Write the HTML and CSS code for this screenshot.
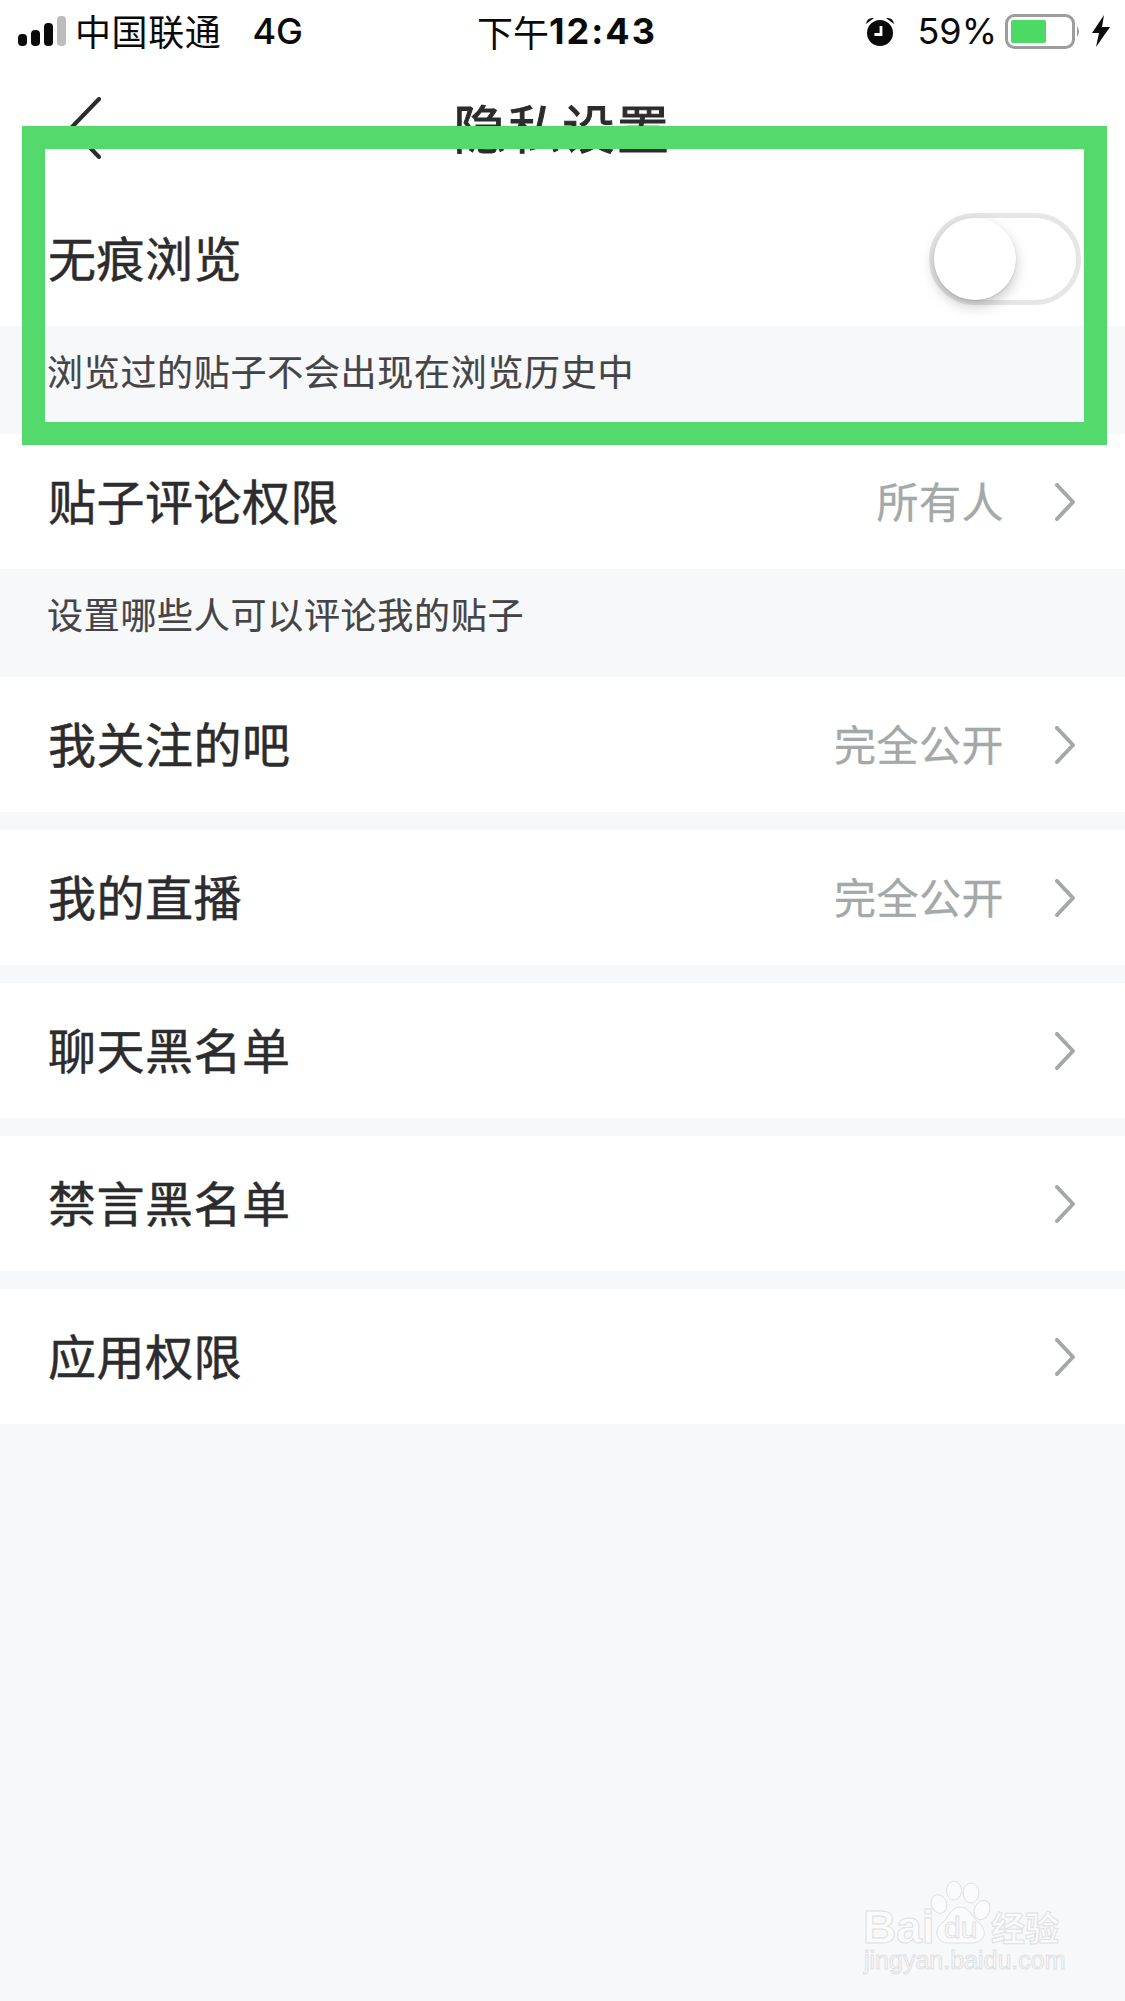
FILE: index.html
```html
<!DOCTYPE html>
<html lang="en">
<head>
  <meta charset="UTF-8">
  <title>隐私设置</title>
  <link rel="stylesheet" href="styles.css">
</head>
<body>

<div class="top">
  <div class="status">
    <div class="status-left">
      <svg class="signal" width="48" height="30" viewBox="0 0 48 30">
        <rect x="0" y="18" width="9" height="12" rx="4" fill="#0a0a0a"/>
        <rect x="13" y="14" width="9" height="16" rx="4" fill="#0a0a0a"/>
        <rect x="26" y="7" width="9" height="23" rx="4" fill="#0a0a0a"/>
        <rect x="39" y="0" width="9" height="30" rx="4" fill="#bdbdbd"/>
      </svg>
      <span class="carrier">中国联通</span>
      <span class="net">4G</span>
    </div>
    <div class="clock">下午<b>12:43</b></div>
    <div class="status-right">
      <svg width="32" height="30" viewBox="0 0 32 30">
        <circle cx="16" cy="17" r="13" fill="#0a0a0a"/>
        <path d="M2 8 Q3 1 10 2 Z M30 8 Q29 1 22 2 Z" fill="#0a0a0a"/>
        <path d="M17 10 V18.5 H10.5" fill="none" stroke="#fff" stroke-width="2.8"/>
      </svg>
      <span class="percent">59%</span>
      <svg width="76" height="35" viewBox="0 0 76 35">
        <rect x="1.5" y="1.5" width="67" height="32" rx="8" fill="#fff" stroke="#9d9d9d" stroke-width="3"/>
        <rect x="6" y="6" width="35" height="23" rx="2" fill="#4cd964"/>
        <path d="M72 12 Q76 17.5 72 23 Z" fill="#9d9d9d"/>
      </svg>
      <svg width="18" height="32" viewBox="0 0 18 32">
        <path d="M12 0 L0 18 H7 L4 32 L18 12 H10 Z" fill="#0a0a0a"/>
      </svg>
    </div>
  </div>
  <div class="nav">
    <svg class="back" width="34" height="62" viewBox="0 0 34 62">
      <path d="M31 2 L3 31 L31 60" fill="none" stroke="#2c2c2e" stroke-width="4" stroke-linecap="round" stroke-linejoin="round"/>
    </svg>
    <div class="nav-title">隐私设置</div>
  </div>
</div>

<div class="row">
  <span class="row-title">无痕浏览</span>
  <div class="toggle"><div class="knob"></div></div>
</div>
<div class="note">浏览过的贴子不会出现在浏览历史中</div>

<div class="row">
  <span class="row-title">贴子评论权限</span>
  <span class="row-value">所有人</span>
  <svg class="chevron" width="20" height="38" viewBox="0 0 20 38"><path d="M2 2 L18 19 L2 36"/></svg>
</div>
<div class="note">设置哪些人可以评论我的贴子</div>

<div class="group">
  <div class="row">
    <span class="row-title">我关注的吧</span>
    <span class="row-value">完全公开</span>
    <svg class="chevron" width="20" height="38" viewBox="0 0 20 38"><path d="M2 2 L18 19 L2 36"/></svg>
  </div>
  <div class="row">
    <span class="row-title">我的直播</span>
    <span class="row-value">完全公开</span>
    <svg class="chevron" width="20" height="38" viewBox="0 0 20 38"><path d="M2 2 L18 19 L2 36"/></svg>
  </div>
  <div class="row">
    <span class="row-title">聊天黑名单</span>
    <svg class="chevron" width="20" height="38" viewBox="0 0 20 38"><path d="M2 2 L18 19 L2 36"/></svg>
  </div>
  <div class="row">
    <span class="row-title">禁言黑名单</span>
    <svg class="chevron" width="20" height="38" viewBox="0 0 20 38"><path d="M2 2 L18 19 L2 36"/></svg>
  </div>
  <div class="row">
    <span class="row-title">应用权限</span>
    <svg class="chevron" width="20" height="38" viewBox="0 0 20 38"><path d="M2 2 L18 19 L2 36"/></svg>
  </div>
</div>

<!-- annotation drawn over the screenshot -->
<div class="highlight"></div>

<svg class="watermark" width="215" height="100" viewBox="0 0 215 100">
  <g class="wm-shape">
    <ellipse cx="79" cy="24" rx="7.5" ry="9.5" transform="rotate(-25 79 24)"/>
    <ellipse cx="94" cy="10.5" rx="7.5" ry="9.5"/>
    <ellipse cx="111" cy="13" rx="8" ry="10"/>
    <ellipse cx="122" cy="30" rx="7.5" ry="10" transform="rotate(25 122 30)"/>
    <path d="M100 27 C110 27 112 38 119 43 C128 50 125 63 112 63 H89 C76 63 73 50 82 43 C89 38 90 27 100 27 Z"/>
  </g>
  <text class="wm-big" x="3" y="63">Bai</text>
  <text class="wm-du" x="84" y="58">du</text>
  <text class="wm-cn" x="131" y="61">经验</text>
  <text class="wm-url" x="4" y="89">jingyan.baidu.com</text>
</svg>

</body>
</html>
```

FILE: styles.css
```css
* {
  box-sizing: border-box;
}

html, body {
  height: 100%;
}

body {
  margin: 0;
  position: relative;
  background: #f7f8fa;
  color: #2c2c2e;
  font-family: "Inter", "Noto Sans CJK SC", sans-serif;
  overflow: hidden;
}

.top {
  background: #fff;
  height: 191px;
}

.status {
  height: 62px;
  display: grid;
  grid-template-columns: 1fr auto 1fr;
  align-items: center;
  padding: 0 15px 0 18px;
  color: #0a0a0a;
  font-size: 36px;
}

.status-left {
  display: flex;
  align-items: center;
}

.carrier {
  margin-left: 9px;
  font-family: "Noto Sans CJK SC", sans-serif;
  line-height: 40px;
  letter-spacing: 0.6px;
  padding-bottom: 2px;
}

.net {
  margin-left: 31px;
  font-weight: 500;
  line-height: 40px;
}

.clock {
  display: flex;
  align-items: center;
  margin-left: 6px;
  font-family: "Noto Sans CJK SC", sans-serif;
  line-height: 40px;
}

.clock b {
  font-family: "Inter", sans-serif;
  font-weight: 700;
  letter-spacing: 2px;
}

.status-right {
  display: flex;
  align-items: center;
  justify-content: flex-end;
}

.percent {
  margin: 0 8px 0 21px;
}

.status-right svg:last-child {
  margin-left: 11px;
}

.nav {
  height: 129px;
  display: flex;
  align-items: center;
  justify-content: center;
  position: relative;
}

.back {
  position: absolute;
  left: 68px;
  top: 35px;
}

.nav-title {
  font-family: "Noto Sans CJK SC", sans-serif;
  font-size: 52px;
  letter-spacing: 2.5px;
  -webkit-text-stroke: 1px #2c2c2e;
}

.row {
  height: 135px;
  background: #fff;
  display: flex;
  align-items: center;
  padding: 0 50px 0 48px;
}

.row-title {
  flex: 1;
  padding-bottom: 5px;
  font-family: "Noto Sans CJK SC", sans-serif;
  font-size: 48px;
  letter-spacing: 0.5px;
  -webkit-text-stroke: 0.5px #2c2c2e;
}

.row-value {
  padding-bottom: 5px;
  font-family: "Noto Sans CJK SC", sans-serif;
  font-size: 42px;
  letter-spacing: 0.5px;
  color: #a3a8a8;
  -webkit-text-stroke: 0.3px #a3a8a8;
  margin-right: 51px;
}

.chevron {
  fill: none;
  stroke: #a3a8a8;
  stroke-width: 4;
  stroke-linecap: round;
  stroke-linejoin: round;
}

.note {
  height: 108px;
  padding: 26px 47px 0;
  font-family: "Noto Sans CJK SC", sans-serif;
  font-size: 36px;
  line-height: 36px;
  letter-spacing: 0.7px;
  color: #444447;
  -webkit-text-stroke: 0.2px #444447;
}

.group {
  display: flex;
  flex-direction: column;
  gap: 18px;
}

.toggle {
  width: 152px;
  height: 92px;
  border: 5px solid #e6e6e6;
  border-radius: 46px;
  display: flex;
  align-items: center;
  margin-right: -6px;
}

.knob {
  width: 82px;
  height: 82px;
  border-radius: 50%;
  background: #fff;
  box-shadow: 0 6px 14px rgba(0, 0, 0, 0.22), 0 1px 2px rgba(0, 0, 0, 0.12);
}

.highlight {
  position: absolute;
  left: 22px;
  top: 126px;
  width: 1085px;
  height: 319px;
  border: 23px solid #54d96c;
}

.watermark {
  position: absolute;
  left: 860px;
  top: 1880px;
}

.watermark text, .wm-shape {
  fill: #fbfbfc;
  stroke: #dfe0e3;
  stroke-width: 1;
}

.wm-big {
  font-family: "Liberation Sans", sans-serif;
  font-size: 46px;
  font-weight: 700;
}

.wm-du {
  font-family: "Liberation Sans", sans-serif;
  font-size: 30px;
}

.wm-cn {
  font-family: "Noto Sans CJK SC", sans-serif;
  font-size: 34px;
  font-weight: 700;
}

.wm-url {
  font-family: "Liberation Sans", sans-serif;
  font-size: 25px;
}
```
